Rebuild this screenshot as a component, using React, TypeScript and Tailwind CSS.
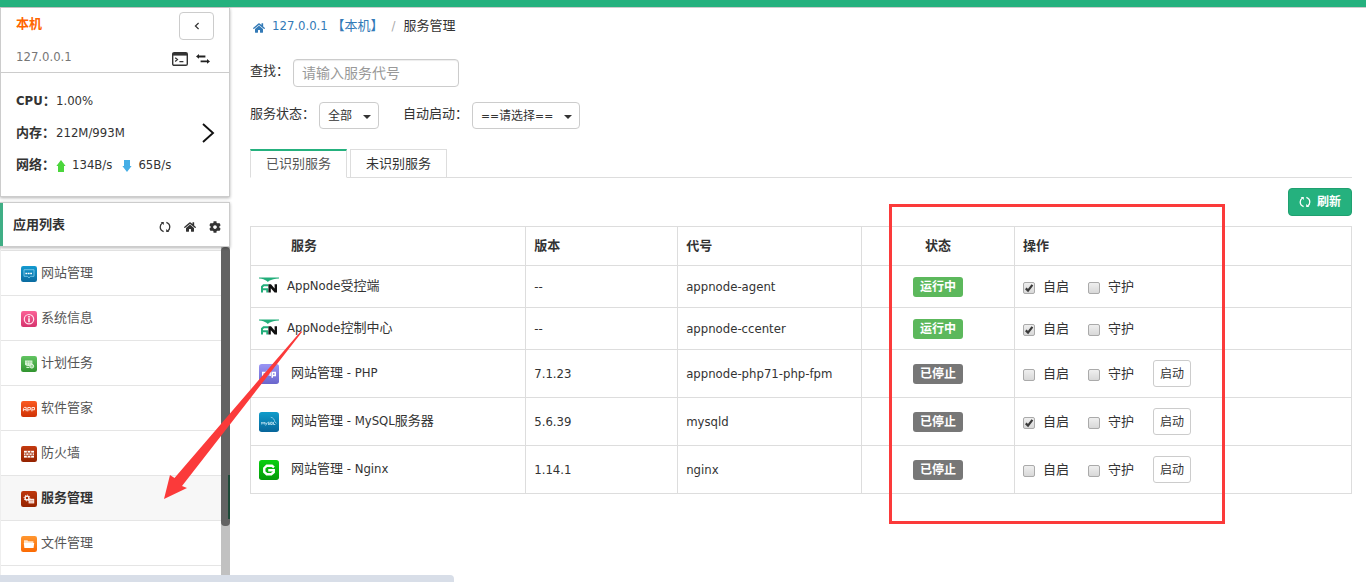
import { useState } from "react";
import type { ReactNode } from "react";
import { FaHome, FaCog } from "react-icons/fa";

type IconProps = { className?: string };

function RefreshIcon({ className }: IconProps) {
  return (
    <svg viewBox="0 0 14 14" className={className} aria-hidden="true">
      <g fill="none" stroke="currentColor" strokeWidth="1.5">
        <path d="M5.4 12.4C2.9 11.4 1.4 9.4 1.4 7C1.4 5 2.3 3.3 4 2.3" />
        <path d="M8.6 1.6C11.1 2.6 12.6 4.6 12.6 7C12.6 9 11.7 10.7 10 11.7" />
      </g>
      <path fill="currentColor" d="M2 1.2H5.6V4.8ZM12 12.8H8.4V9.2Z" />
    </svg>
  );
}

function TerminalIcon() {
  return (
    <svg viewBox="0 0 16 14" className="h-3.5 w-4" aria-hidden="true">
      <rect x="0.7" y="0.7" width="14.6" height="12.6" rx="1.4" fill="#fff" stroke="#333" strokeWidth="1.4" />
      <path d="M1 1H15V3.6H1Z" fill="#333" />
      <path d="M3.2 5.8L5.4 7.6L3.2 9.4M7.4 9.6H11.4" fill="none" stroke="#333" strokeWidth="1.3" />
    </svg>
  );
}

function SwitchIcon() {
  return (
    <svg viewBox="0 0 14 10" className="h-2.5 w-3.5" aria-hidden="true">
      <path fill="#222" d="M0 2.4L3 0V1.6H9.4V3.4H3V4.8ZM14 7.4L11 5V6.4H4.6V8.2H11V9.8Z" />
    </svg>
  );
}

function NetArrow({ down }: { down?: boolean }) {
  return (
    <svg viewBox="0 0 10 12" className="mt-0.5 h-3 w-2.5" aria-hidden="true">
      {down ? (
        <path fill="#45aee6" d="M2 0H8V6H9.6L5 12L0.4 6H2Z" />
      ) : (
        <path fill="#4bd63c" d="M5 0L9.6 6H8V12H2V6H0.4Z" />
      )}
    </svg>
  );
}

function Tile({ id, from, to, size, children }: { id: string; from: string; to: string; size: "sm" | "md"; children: ReactNode }) {
  return (
    <svg viewBox="0 0 16 16" className={size === "sm" ? "size-4 shrink-0" : "size-5 shrink-0"} aria-hidden="true">
      <defs>
        <linearGradient id={id} x1="0" y1="0" x2="0" y2="1">
          <stop offset="0" stopColor={from} />
          <stop offset="1" stopColor={to} />
        </linearGradient>
      </defs>
      <rect width="16" height="16" rx="2.2" fill={`url(#${id})`} />
      {children}
    </svg>
  );
}

const menu = [
  {
    name: "网站管理",
    icon: (
      <Tile id="m1" from="#149ad0" to="#0a6ba0" size="sm">
        <path d="M3 3.7H13V10.3H9.4L8 12L6.6 10.3H3Z" fill="none" stroke="#7cc8ea" strokeWidth="0.9" />
        <path d="M4.4 7.4H11.6" stroke="#fff" strokeWidth="1.5" strokeDasharray="1.8 0.6" />
      </Tile>
    ),
  },
  {
    name: "系统信息",
    icon: (
      <Tile id="m2" from="#fb6297" to="#d6336d" size="sm">
        <circle cx="8" cy="8.2" r="4.7" fill="none" stroke="#ffe3ee" strokeWidth="1.2" />
        <path d="M8 5V6.4M8 7.2V11.3" stroke="#fff" strokeWidth="1.5" />
      </Tile>
    ),
  },
  {
    name: "计划任务",
    icon: (
      <Tile id="m3" from="#62c462" to="#31942f" size="sm">
        <path d="M4 4.4H11.4V10H6L4 8.8Z" fill="#d8f2d5" />
        <path d="M4.4 6.2H11M6.4 5V9.4M8.8 5V9.4" stroke="#8fd08c" strokeWidth="0.5" />
        <circle cx="10.8" cy="10.2" r="1.9" fill="#9ad797" stroke="#e6f7e4" strokeWidth="0.9" />
        <path d="M5.4 11.4H8.4" stroke="#d8f2d5" strokeWidth="1.2" />
      </Tile>
    ),
  },
  {
    name: "软件管家",
    icon: (
      <Tile id="m4" from="#fb5a22" to="#cf3205" size="sm">
        <path d="M2.4 10.2V7.6L3.4 6.4H5.2V10.2M2.4 8.6H5.2M6.8 10.4V6.5H9.4V8.8H6.8M10.9 10.4V6.5H13.5V8.8H10.9" fill="none" stroke="#ffe7df" strokeWidth="1" />
      </Tile>
    ),
  },
  {
    name: "防火墙",
    icon: (
      <Tile id="m5" from="#c33a10" to="#942200" size="sm">
        <rect x="3" y="4.8" width="10" height="6.8" fill="#fff" />
        <path d="M3 7H13M3 9.3H13M6.3 4.8V7M9.7 4.8V7M4.8 7V9.3M8 7V9.3M11.2 7V9.3M6.3 9.3V11.6M9.7 9.3V11.6" stroke="#a62d08" strokeWidth="0.8" />
      </Tile>
    ),
  },
  {
    name: "服务管理",
    icon: (
      <Tile id="m6" from="#bf370c" to="#952300" size="sm">
        <circle cx="6" cy="7" r="1.9" fill="none" stroke="#fff" strokeWidth="1.3" />
        <circle cx="6" cy="7" r="2.9" fill="none" stroke="#fff" strokeWidth="0.9" strokeDasharray="1.2 1" />
        <rect x="7.6" y="7.8" width="5.6" height="4.6" fill="#ffece5" />
        <path d="M8.4 9.5H12.4M8.4 11H12.4" stroke="#c9826a" strokeWidth="0.6" />
      </Tile>
    ),
  },
  {
    name: "文件管理",
    icon: (
      <Tile id="m7" from="#ff9730" to="#fb6a04" size="sm">
        <path d="M3 4.2H6.4L7.2 5.2H12.4V7H3Z" fill="#ffe4c9" />
        <path d="M2.8 6.9H13.2L12.6 12H3.4Z" fill="#fff" />
      </Tile>
    ),
  },
];

function AppNodeLogo() {
  return (
    <svg viewBox="0 0 20 16" className="mb-1 h-4 w-5 shrink-0" aria-hidden="true">
      <path d="M0 0.4H20V1.4C16 1.4 12.4 2.4 10.2 3.8L8.9 5L7.4 3.8C5.6 2.4 3.6 1.4 0 1.4Z" fill="#23ae7b" />
      <path d="M3 15.4V9.8L4.6 8.3H9.4M3 12.2H9M8.3 12.2V15.4" fill="none" stroke="#23ae7b" strokeWidth="2" />
      <path d="M9.4 15.4V7.2H12L15.6 11.4V7.2H18V15.4H15.6L11.8 11.2V15.4Z" fill="#111" />
    </svg>
  );
}

const phpIcon = (
  <Tile id="s1" from="#9a95f5" to="#6a66cc" size="md">
    <path d="M3 11V6.8H5.2V9.2H3M6.8 4.9V9.6M6.8 7H8.9V9.6M10.6 11V6.8H13V9.2H10.6" fill="none" stroke="#fff" strokeWidth="1.2" />
  </Tile>
);
const mysqlIcon = (
  <Tile id="s2" from="#0f9ccb" to="#07659a" size="md">
    <path d="M2.2 10V8L3.2 9.2L4.2 8V10M5 8.4L5.8 9.8L6.6 8.4M5.8 9.8L5.3 10.8M8.4 8.2H7.3V9.1H8.4V10H7.2M9.3 8.2H10.6V10H9.3ZM11.6 8V10H13" fill="none" stroke="#d7eff9" strokeWidth="0.6" />
    <path d="M9.4 4.2C11.6 4.6 12.4 6.2 12.7 8L14 9" fill="none" stroke="#a7dcf2" strokeWidth="0.6" />
  </Tile>
);
const nginxIcon = (
  <Tile id="s3" from="#08d00f" to="#059a0a" size="md">
    <path d="M12 5.9L10.4 4.6H6.2L4.2 6.6V9.6L6.2 11.4H9.8L11.8 9.8V8.2H7.4" fill="none" stroke="#fff" strokeWidth="1.9" />
  </Tile>
);

type Service = {
  name: string;
  icon: ReactNode;
  core?: boolean;
  version: string;
  code: string;
  running: boolean;
  auto: boolean;
};

const services: Service[] = [
  { name: "AppNode受控端", icon: <AppNodeLogo />, core: true, version: "--", code: "appnode-agent", running: true, auto: true },
  { name: "AppNode控制中心", icon: <AppNodeLogo />, core: true, version: "--", code: "appnode-ccenter", running: true, auto: true },
  { name: "网站管理 - PHP", icon: phpIcon, version: "7.1.23", code: "appnode-php71-php-fpm", running: false, auto: false },
  { name: "网站管理 - MySQL服务器", icon: mysqlIcon, version: "5.6.39", code: "mysqld", running: false, auto: true },
  { name: "网站管理 - Nginx", icon: nginxIcon, version: "1.14.1", code: "nginx", running: false, auto: false },
];

function Check({ label, initial }: { label: string; initial: boolean }) {
  const [on, setOn] = useState(initial);
  return (
    <label className="flex items-center gap-2">
      <span className="relative mt-0.5 flex size-3">
        <input
          type="checkbox"
          checked={on}
          onChange={(e) => setOn(e.target.checked)}
          className="size-3 appearance-none rounded-[2px] border border-[#aaa] bg-linear-to-b from-[#efefef] to-[#d8d8d8]"
        />
        {on && (
          <svg viewBox="0 0 12 12" className="pointer-events-none absolute inset-0 size-3" aria-hidden="true">
            <path d="M2.8 6.4L5 8.6L9.4 2.8" fill="none" stroke="#3a3a3a" strokeWidth="2.2" />
          </svg>
        )}
      </span>
      {label}
    </label>
  );
}

function Dropdown({ id, option, wide }: { id: string; option: string; wide?: boolean }) {
  return (
    <span className="relative inline-flex">
      <select
        id={id}
        className={`h-[27px] appearance-none rounded border border-[#ccc] bg-white pl-2 text-xs text-[#333] ${wide ? "w-[108px]" : "w-[60px]"}`}
      >
        <option>{option}</option>
      </select>
      <svg viewBox="0 0 8 4" className="pointer-events-none absolute top-[13px] right-2 h-1 w-2" aria-hidden="true">
        <path d="M0 0H8L4 4Z" fill="#333" />
      </svg>
    </span>
  );
}

function Sidebar() {
  return (
    <aside className="flex w-[230px] shrink-0 flex-col">
      <section className="border border-t-0 border-[#ccc] shadow-[0_1px_3px_rgba(0,0,0,0.3)]">
        <div className="border-b border-[#ccc] px-[15px] pt-1 pb-[5px]">
          <div className="flex items-start justify-between">
            <span className="text-[13px] leading-6 font-bold text-[#ff6600]">本机</span>
            <button type="button" aria-label="收起" className="flex h-7 w-[35px] items-center justify-center rounded border border-[#ccc]">
              <svg viewBox="0 0 6 8" className="h-2 w-1.5" aria-hidden="true">
                <path d="M4.6 1L1.4 4L4.6 7" fill="none" stroke="#333" strokeWidth="1.2" />
              </svg>
            </button>
          </div>
          <div className="flex h-[27px] items-center justify-between pt-2 pb-0.5">
            <span className="text-[#777]">127.0.0.1</span>
            <span className="flex items-center gap-2 pt-1 pr-1">
              <button type="button" aria-label="终端"><TerminalIcon /></button>
              <button type="button" aria-label="切换"><SwitchIcon /></button>
            </span>
          </div>
        </div>
        <div className="flex h-[123px] items-center justify-between pr-[14px] pb-1 pl-[15px]">
          <dl className="grid grid-cols-[40px_auto] leading-8">
            <dt className="font-bold">CPU：</dt>
            <dd>1.00%</dd>
            <dt className="font-bold">内存：</dt>
            <dd>212M/993M</dd>
            <dt className="font-bold">网络：</dt>
            <dd className="flex items-center">
              <span className="flex items-center gap-1.5"><NetArrow />134B/s</span>
              <span className="ml-2.5 flex items-center gap-1.5"><NetArrow down />65B/s</span>
            </dd>
          </dl>
          <button type="button" aria-label="详情">
            <svg viewBox="0 0 14 20" className="h-5 w-3.5" aria-hidden="true">
              <path d="M2 1L12 10L2 19" fill="none" stroke="#111" strokeWidth="1.9" />
            </svg>
          </button>
        </div>
      </section>

      <section className="relative mt-[5px] flex h-[45px] shrink-0 items-center justify-between border border-l-0 border-[#ccc] pr-2 shadow-[0_1px_3px_rgba(0,0,0,0.3)]">
        <h2 className="flex h-full items-center border-l-3 border-[#3fae85] pl-2.5 font-bold">应用列表</h2>
        <span className="flex items-center gap-[13px] pt-1 text-[#333]">
          <button type="button" aria-label="刷新列表"><RefreshIcon className="size-3" /></button>
          <button type="button" aria-label="首页"><FaHome className="size-3" /></button>
          <button type="button" aria-label="设置"><FaCog className="size-3" /></button>
        </span>
      </section>

      <div className="flex min-h-0 grow">
        <nav className="grow overflow-hidden border-l border-[#eee] pt-[3px]">
          <ul className="border-t border-[#e5e5e5]">
            {menu.map((m) => {
              const active = m.name === "服务管理";
              return (
                <li key={m.name} className="border-b border-[#e5e5e5]">
                  <a
                    href="#"
                    className={`flex h-11 items-center gap-1 pl-5 ${active ? "bg-[#f7f7f7] font-bold text-[#333]" : "text-[#555]"}`}
                  >
                    <span className="pt-0.5">{m.icon}</span>
                    <span className="pb-px">{m.name}</span>
                  </a>
                </li>
              );
            })}
          </ul>
        </nav>
        <div className="w-[9px] shrink-0 bg-[#c1c1c1]">
          <div className="flex h-[279px] items-end rounded bg-[#636363]">
            <div className="mb-[7px] ml-auto h-11 w-0.5 bg-[#1d4a38]" />
          </div>
        </div>
      </div>
    </aside>
  );
}

const cell = "border border-[#ddd] px-2";

export default function App() {
  return (
    <div className="relative flex h-screen flex-col overflow-hidden bg-white font-['DejaVu_Sans_Condensed','Noto_Sans_CJK_SC',sans-serif] text-[13px] leading-5 text-[#333]">
      <header className="h-2 shrink-0 border-b border-[#ccc] bg-[#25b17e]" />
      <div className="flex min-h-0 grow">
        <Sidebar />
        <main className="min-w-0 grow pr-3.5 pl-5">
          <nav className="flex h-[35px] items-center">
            <a href="#" className="flex items-center text-[#337ab7]">
              <FaHome className="mt-1 mr-[7px] ml-[3px] size-3" />
              127.0.0.1 【本机】
            </a>
            <span className="mx-2 text-[#aaa]">/</span>
            <span>服务管理</span>
          </nav>

          <div className="mt-4 flex items-center">
            <label htmlFor="find" className="w-[43px] pb-1">查找：</label>
            <input
              id="find"
              placeholder="请输入服务代号"
              className="h-7 w-[166px] rounded border border-[#ccc] px-2 text-sm shadow-[inset_0_1px_1px_rgba(0,0,0,0.075)] placeholder:text-[#999]"
            />
          </div>

          <div className="mt-[15px] flex items-center">
            <label htmlFor="state" className="w-[69px] pb-1">服务状态：</label>
            <Dropdown id="state" option="全部" />
            <label htmlFor="auto" className="ml-6 w-[69px] pb-1">自动启动：</label>
            <Dropdown id="auto" option="==请选择==" wide />
          </div>

          <div role="tablist" className="mt-5 flex gap-[3px] border-b border-[#ddd]">
            <button type="button" role="tab" aria-selected="true" className="-mb-px h-[29px] border border-t-2 border-[#ddd] border-t-[#25b17e] border-b-white bg-white px-[15px] text-[#555]">
              已识别服务
            </button>
            <button type="button" role="tab" aria-selected="false" className="h-7 border border-b-0 border-[#ddd] px-[15px]">
              未识别服务
            </button>
          </div>

          <div className="my-2.5 flex justify-end">
            <button type="button" className="flex h-7 items-center gap-1.5 rounded border border-[#20a070] bg-[#25b17e] px-2.5 text-xs font-bold text-white">
              <RefreshIcon className="size-3" />
              刷新
            </button>
          </div>

          <table className="w-full table-fixed border-collapse text-left">
            <colgroup>
              <col className="w-[25%]" />
              <col className="w-[13.8%]" />
              <col className="w-[16.7%]" />
              <col className="w-[13.9%]" />
              <col />
            </colgroup>
            <thead>
              <tr className="h-[39px]">
                <th className={`${cell} pl-10`}>服务</th>
                <th className={cell}>版本</th>
                <th className={cell}>代号</th>
                <th className={`${cell} text-center`}>状态</th>
                <th className={cell}>操作</th>
              </tr>
            </thead>
            <tbody>
              {services.map((s) => (
                <tr key={s.code} className={s.core ? "h-[42px]" : "h-12"}>
                  <td className={cell}>
                    <span className={`flex items-center ${s.core ? "gap-2" : "gap-3"}`}>
                      {s.icon}
                      <span className="pb-0.5">{s.name}</span>
                    </span>
                  </td>
                  <td className={cell}>{s.version}</td>
                  <td className={cell}>{s.code}</td>
                  <td className={`${cell} text-center`}>
                    <span className={`inline-block w-[50px] rounded-[3px] align-middle text-xs leading-5 font-bold text-white ${s.running ? "bg-[#5cb85c]" : "bg-[#777]"}`}>
                      {s.running ? "运行中" : "已停止"}
                    </span>
                  </td>
                  <td className={cell}>
                    <span className="flex items-center gap-[19px]">
                      <Check label="自启" initial={s.auto} />
                      <Check label="守护" initial={false} />
                      {!s.running && (
                        <button type="button" className="h-[27px] w-[38px] rounded-[3px] border border-[#ccc] bg-white text-xs">
                          启动
                        </button>
                      )}
                    </span>
                  </td>
                </tr>
              ))}
            </tbody>
          </table>
        </main>
      </div>

      <div className="absolute bottom-0 left-0 h-[7px] w-[454px] rounded-tr bg-[#d8dee8]" />
      <div className="pointer-events-none absolute top-[204px] left-[889px] h-80 w-[336px] border-3 border-[#fb3a3a]" />
      <svg viewBox="0 0 140 170" className="pointer-events-none absolute top-[331px] left-[163px] h-[170px] w-[140px]" aria-hidden="true">
        <path d="M1 168L7 144L11.5 147L138 0L139 1L19 155L24 157Z" fill="#fb3a3a" />
      </svg>
    </div>
  );
}
